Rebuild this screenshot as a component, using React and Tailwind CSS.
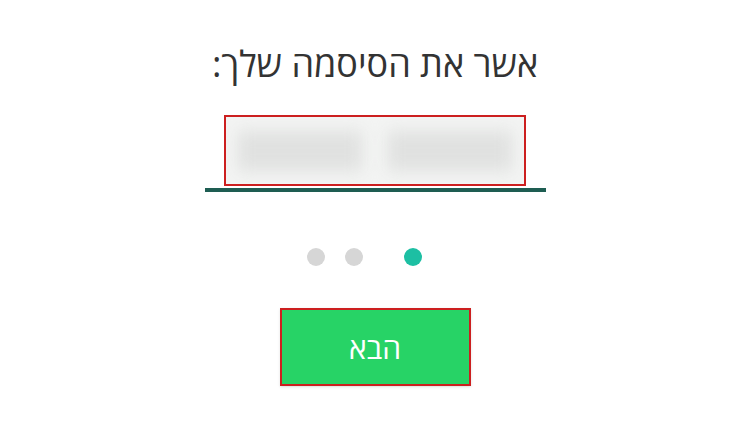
import React from 'react';

export default function App() {
  return (
    <div
      dir="rtl"
      className="w-[750px] h-[422px] bg-white flex flex-col items-center overflow-hidden"
      style={{ fontFamily: '"Open Sans", "Noto Sans", "DejaVu Sans", sans-serif' }}
    >
      {/* Title */}
      <h1 className="mt-[40px] h-[48px] leading-[48px] text-[36px] text-[#333333] font-normal">
        אשר את הסיסמה שלך:
      </h1>

      {/* Password field (masked) */}
      <div className="mt-[27px] w-[341px] flex flex-col items-center">
        <div className="w-[302px] h-[71px] border-2 border-[#cc1f1f] overflow-hidden bg-[#f3f4f3]">
          <div className="w-full h-full flex items-center justify-center gap-[26px] blur-[8px]">
            <div className="w-[124px] h-[40px] bg-[#e0e1e0]" />
            <div className="w-[124px] h-[40px] bg-[#e0e1e0]" />
          </div>
        </div>
        <div className="mt-[2px] w-full h-[4px] bg-[#1e5d52]" />
      </div>

      {/* Page indicator */}
      <div dir="ltr" className="mt-[56px] flex items-center pr-[21px]">
        <span className="w-[18px] h-[18px] rounded-full bg-[#d6d6d6]" />
        <span className="ml-[20px] w-[18px] h-[18px] rounded-full bg-[#d6d6d6]" />
        <span className="ml-[41px] w-[18px] h-[18px] rounded-full bg-[#1dbfa3]" />
      </div>

      {/* Next button */}
      <button className="mt-[42px] w-[191px] h-[78px] bg-[#27d366] border-2 border-[#cc1f1f] text-white text-[30px] font-normal shadow-sm">
        הבא
      </button>
    </div>
  );
}
